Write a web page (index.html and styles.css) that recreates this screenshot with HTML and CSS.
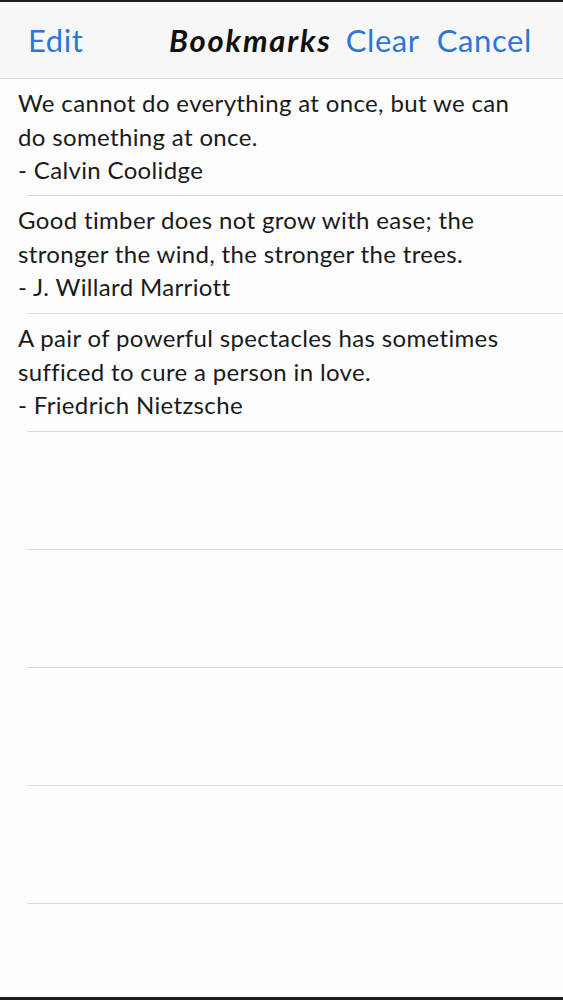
FILE: index.html
```html
<!DOCTYPE html>
<html>
<head>
<meta charset="utf-8">
<link rel="stylesheet" href="styles.css">
</head>
<body>
<div class="screen">
  <header class="nav">
    <span class="nav-btn edit">Edit</span>
    <span class="title">Bookmarks</span>
    <span class="nav-btn clear">Clear</span>
    <span class="nav-btn cancel">Cancel</span>
  </header>
  <ul class="list">
    <li class="row">
      <p class="quote">We cannot do everything at once, but we can do something at once.</p>
      <p class="author">- Calvin Coolidge</p>
    </li>
    <li class="row">
      <p class="quote">Good timber does not grow with ease; the stronger the wind, the stronger the trees.</p>
      <p class="author">- J. Willard Marriott</p>
    </li>
    <li class="row">
      <p class="quote">A pair of powerful spectacles has sometimes sufficed to cure a person in love.</p>
      <p class="author">- Friedrich Nietzsche</p>
    </li>
    <li class="row empty"></li>
    <li class="row empty"></li>
    <li class="row empty"></li>
    <li class="row empty"></li>
  </ul>
</div>
</body>
</html>
```

FILE: styles.css
```css
* { box-sizing: border-box; }
html, body { margin: 0; padding: 0; }
body {
  background: #fdfdfd;
  font-family: Lato, "Noto Sans", sans-serif;
  font-variant-ligatures: none;
  color: #1a1a1a;
}
.screen {
  width: 563px;
  height: 1000px;
  border-top: 2px solid #1e1e1e;
  border-bottom: 3px solid #1e1e1e;
  background: #fdfdfd;
  overflow: hidden;
}
.nav {
  height: 77px;
  background: #f7f7f7;
  border-bottom: 1px solid #d6d6d6;
  display: flex;
  align-items: center;
  padding: 0 31px 0 28px;
  font-size: 31px;
  letter-spacing: 0.6px;
}
.nav-btn { color: #2b78d8; }
.edit { margin-right: auto; }
.title {
  font-weight: 700;
  font-style: italic;
  color: #111;
  letter-spacing: 1.8px;
  margin-right: 14px;
}
.clear { margin-right: 17px; }
.list {
  list-style: none;
  margin: 0;
  padding: 0 0 0 27px;
}
.row {
  height: 118px;
  border-bottom: 1px solid #dcdcdc;
  padding: 7px 0 0 0;
}
.row:first-child { height: 117px; }
.quote, .author {
  margin: 0 0 0 -9px;
  font-size: 24px;
  line-height: 33.5px;
  letter-spacing: 0.35px;
  padding-right: 20px;
}
```
